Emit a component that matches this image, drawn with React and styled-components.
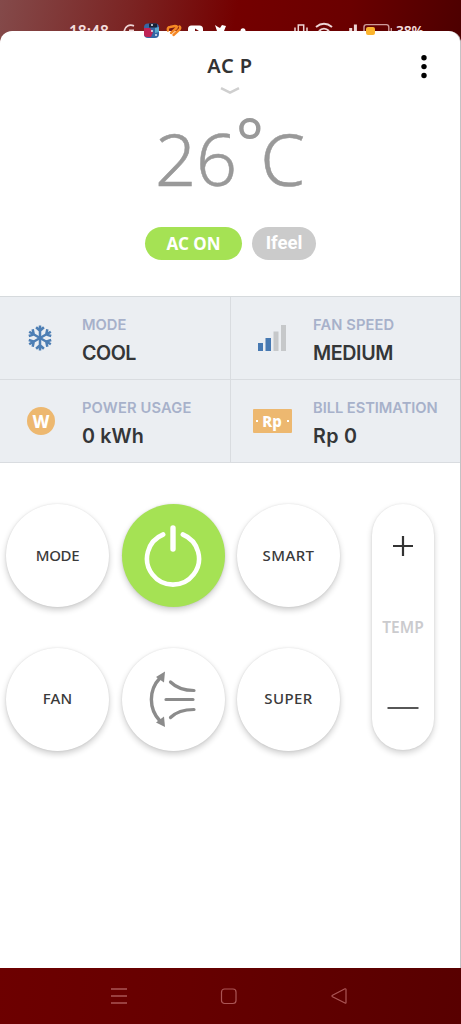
import React from "react";
import styled, { createGlobalStyle } from "styled-components";

const Global = createGlobalStyle`
  * { box-sizing: border-box; }
  body { margin: 0; background: #650000; }
`;

const Screen = styled.div`
  position: relative;
  width: 461px;
  height: 1024px;
  padding-top: 31px;
  display: flex;
  flex-direction: column;
  overflow: hidden;
  font-family: "Noto Sans", sans-serif;
  background: linear-gradient(100deg, #844a4a 0%, #7b2423 28%, #740000 51%, #6a0000 75%, #4d0000 100%) 0 0 / 100% 44px no-repeat,
    linear-gradient(95deg, #700000 0%, #660000 50%, #580000 100%);
`;

const StatusBar = styled.div`
  position: absolute;
  top: 20px;
  left: 0;
  width: 100%;
  height: 22px;
  z-index: 2;
  pointer-events: none;
`;

const StatusIcons = styled.svg`
  display: block;
`;

const StatusText = styled.span`
  position: absolute;
  top: 0;
  left: ${(p) => p.$left}px;
  height: 11px;
  overflow: hidden;
  font-size: ${(p) => p.$size}px;
  line-height: 22px;
  font-weight: 600;
  letter-spacing: ${(p) => p.$spacing || 0}px;
  color: #f3dddd;
`;

const Sheet = styled.main`
  flex: 0 0 937px;
  display: flex;
  flex-direction: column;
  background: #fff;
  border-right: 1px solid #c3c3c5;
  border-radius: 12px 12px 0 0;
`;

const Header = styled.header`
  height: 66px;
  display: grid;
  grid-template-columns: 74px 1fr 74px;
`;

const TitleGroup = styled.div`
  grid-column: 2;
  display: flex;
  flex-direction: column;
  align-items: center;
  padding-top: 22px;
`;

const Title = styled.h1`
  margin: 0;
  font-size: 20px;
  line-height: 26px;
  font-weight: 600;
  color: #333;
  letter-spacing: 0.5px;
`;

const Chevron = styled.svg`
  margin-top: 8px;
  display: block;
`;

const MenuButton = styled.button`
  padding: 23px 0 0 35px;
  border: 0;
  background: none;
  display: flex;
  align-items: flex-start;
`;

const Temperature = styled.div`
  height: 130px;
  padding-left: 155px;
  display: flex;
  align-items: flex-start;
  font-size: 72px;
  font-weight: 300;
  line-height: 98px;
  padding-top: 12px;
  color: #999;
  -webkit-text-stroke: 0.5px #999;
  white-space: nowrap;
`;

const Degree = styled.span`
  width: 23px;
  margin: -17px -1px 0 1px;
  display: flex;
  justify-content: center;
  font-size: 67px;
  font-weight: 400;
  -webkit-text-stroke: 0;
`;

const Badges = styled.div`
  display: flex;
  gap: 10px;
  padding-left: 145px;
  height: 69px;
`;

const Badge = styled.span`
  width: ${(p) => p.$width}px;
  height: 33px;
  border-radius: 17px;
  background: ${(p) => p.$color};
  color: #fff;
  font-family: ${(p) => p.$font || "inherit"};
  font-size: ${(p) => p.$size || 17}px;
  font-weight: 700;
  line-height: 33px;
  text-align: center;
`;

const InfoGrid = styled.section`
  display: grid;
  grid-template-columns: 231px 229px;
  grid-auto-rows: 83px;
  height: 167px;
  background: #ebeef2;
  border-top: 1px solid #d6dadd;
`;

const InfoCell = styled.div`
  display: grid;
  grid-template-columns: 82px 1fr;
  border-bottom: 1px solid #d9dce0;
  border-right: ${(p) => (p.$divider ? "1px solid #d9dce0" : "0")};
`;

const InfoIcon = styled.div`
  display: flex;
  align-items: center;
  justify-content: center;
  padding-right: ${(p) => p.$inset || 0}px;
`;

const InfoText = styled.div`
  padding-top: 18px;
  font-family: Inter, sans-serif;
  white-space: nowrap;
`;

const InfoLabel = styled.div`
  font-size: 14.7px;
  line-height: 21px;
  font-weight: 600;
  color: #a7b1ca;
  letter-spacing: ${(p) => p.$spacing || 0}px;
`;

const InfoValue = styled.div`
  margin-top: 3px;
  font-size: 19.7px;
  line-height: 28px;
  font-weight: 600;
  color: #343638;
  letter-spacing: ${(p) => p.$spacing || 0}px;
`;

const Controls = styled.section`
  display: flex;
  gap: 32px;
  padding: 41px 0 0 6px;
`;

const ButtonGrid = styled.div`
  display: grid;
  grid-template-columns: repeat(3, 103px);
  grid-auto-rows: 103px;
  column-gap: 12.5px;
  row-gap: 40.5px;
`;

const RoundButton = styled.button`
  display: flex;
  align-items: center;
  justify-content: center;
  border: 0;
  padding: 0 0 2px;
  border-radius: 50%;
  background: ${(p) => (p.$active ? "#a5e254" : "#fff")};
  box-shadow: 0 3px 6px rgba(0, 0, 0, 0.2), 0 0 2px rgba(0, 0, 0, 0.1);
  font-family: inherit;
  font-size: 15px;
  font-weight: 500;
  letter-spacing: ${(p) => p.$spacing || 0}px;
  color: #3a3a3a;
`;

const TempPill = styled.div`
  width: 62px;
  height: 246px;
  border-radius: 31px;
  background: #fff;
  box-shadow: 0 3px 6px rgba(0, 0, 0, 0.18), 0 0 2px rgba(0, 0, 0, 0.1);
  display: flex;
  flex-direction: column;
  align-items: center;
  justify-content: space-between;
  padding: 31px 0 31px;
  font-size: 15.5px;
  line-height: 22px;
  font-weight: 600;
  color: #cbcbce;
`;

const NavBar = styled.nav`
  height: 56px;
  display: flex;
  gap: 90px;
  padding: 18px 0 0 109px;
`;

const StatusBarRow = () => (
  <StatusBar>
    <StatusText $left={69} $size={15.5} $spacing={0}>18:48</StatusText>
    <StatusText $left={396} $size={14} $spacing={-0.2}>38%</StatusText>
    <StatusIcons width="461" height="22" viewBox="0 20 461 22" fill="none">
      <g stroke="#eed6d6" strokeWidth="1.8">
        <path d="M134 25.8c-5-1.7-9 .5-9.8 5.2M129 30.4h5" />
        <path d="M295 27.5v3.5M307 27.5v3.5M298.3 31v-6h5.4v6" strokeWidth="1.5" />
        <path d="M316 27c5-4 11-4 16 0M319 31c3-3 7-3 10 0" strokeWidth="2" />
        <path d="M350.7 28v3M355.4 24.5v6.5" strokeWidth="3" />
      </g>
      <rect x="144" y="23.5" width="15" height="14.5" rx="4" fill="#3567a5" />
      <path d="M144 28h6l3 4-2 5h-4q-3 0-3-3z" fill="#bf2456" />
      <path d="M149 23.5h8v4h-8z" fill="#182235" />
      <path d="M155 28l4-1v5l-4 1z" fill="#5ca9ca" />
      <path d="M151 25h2M151 31h2M155 35h2" stroke="#e4eaf3" strokeWidth="1.5" />
      <path d="M168 30.5q-1-3 2-3.5l5-1q3 0 1.5 2L171 33M173.5 35l6-5.5q1.5-2 0-3" stroke="#f68824" strokeWidth="2.4" strokeLinecap="round" strokeLinejoin="round" />
      <path d="M188 31v-2q0-3.5 3.5-3.5h8q3.5 0 3.5 3.5v2h-4l-4-2.6V31z" fill="#fff" />
      <path d="M215 25l3 2 2 1 2-3 4 1-2 5h-7z" fill="#fff" />
      <circle cx="243" cy="30.7" r="2.5" fill="#fff" />
      <path d="M364 31v-4q0-2.4 2.4-2.4h20q2.4 0 2.4 2.4v4M391.3 28v3" stroke="#cd9a9a" strokeWidth="1.4" />
      <rect x="366" y="27" width="9" height="8" rx="2" fill="#fbb42d" />
    </StatusIcons>
  </StatusBar>
);

const Snowflake = () => (
  <svg width="24" height="26" viewBox="-12 -13 24 26" stroke="#4d7eb4" strokeWidth="2.5" fill="none">
    {[0, 60, 120, 180, 240, 300].map((angle) => (
      <path key={angle} transform={`rotate(${angle})`} d="M0 0V-12.5M-3.9-10.7L0-7.2L3.9-10.7" />
    ))}
  </svg>
);

const SpeedBars = () => (
  <svg width="28" height="27" viewBox="0 0 28 27">
    <path d="M0 18h5v8H0zM7.5 13h5.5v13H7.5z" fill="#4779b2" />
    <path d="M15.5 6.5h5V26h-5zM23 0h5v26h-5z" fill="#c6c8ca" />
  </svg>
);

const WattIcon = styled.span`
  width: 28px;
  height: 28px;
  border-radius: 50%;
  background: #edb870;
  color: #fff;
  font-size: 17px;
  line-height: 29px;
  font-weight: 800;
  text-align: center;
`;

const RupiahIcon = styled.span`
  width: 39px;
  height: 24px;
  border-radius: 1px;
  background: #edb870;
  color: #fff;
  display: flex;
  align-items: center;
  justify-content: space-between;
  padding: 0 3px;
  font-size: 15px;
  line-height: 22px;
  font-weight: 800;
  &::before, &::after {
    content: "";
    width: 2px;
    height: 2px;
    background: #fff;
  }
`;

const info = [
  { label: "MODE", value: "COOL", icon: <Snowflake />, inset: 2, labelSpacing: 0, valueSpacing: -0.5 },
  { label: "FAN SPEED", value: "MEDIUM", icon: <SpeedBars />, inset: 0, labelSpacing: 0.1, valueSpacing: -0.4 },
  { label: "POWER USAGE", value: "0 kWh", icon: <WattIcon>W</WattIcon>, inset: 0, labelSpacing: 0.15, valueSpacing: 0.1 },
  { label: "BILL ESTIMATION", value: "Rp 0", icon: <RupiahIcon>Rp</RupiahIcon>, inset: 0, labelSpacing: -0.05, valueSpacing: 0.3 },
];

const PowerIcon = () => (
  <svg width="60" height="64" viewBox="0 0 60 64" fill="none" stroke="#fff" strokeLinecap="round">
    <path d="M20.2 11.5A26 26 0 1 0 39.8 11.5" strokeWidth="4.6" />
    <path d="M30 5V26" strokeWidth="5.4" />
  </svg>
);

const SwingIcon = () => (
  <svg width="48" height="58" viewBox="0 0 48 58" fill="none" stroke="#8b8b8b" strokeLinecap="round">
    <path d="M11 9C-.5 21-.5 40 11 52" strokeWidth="3.4" />
    <path d="M16 2.5L7 8L15 13.5zM16 58L7 53.5L15 47.5z" fill="#8b8b8b" stroke="none" />
    <path d="M21.5 13C27 18.5 34 21.5 45 21.5M17 30.5H44M21.5 48.5C27 43 34 40.5 45 40.5" strokeWidth="3.2" />
  </svg>
);

export default function App() {
  return (
    <Screen>
      <Global />
      <StatusBarRow />
      <Sheet>
        <Header>
          <TitleGroup>
            <Title>AC P</Title>
            <Chevron width="20" height="8" viewBox="0 0 20 8" fill="none">
              <path d="M1 1.2L10 5.7L19 1.2" stroke="#cfcfcf" strokeWidth="2.5" />
            </Chevron>
          </TitleGroup>
          <MenuButton aria-label="Menu">
            <svg width="6" height="25" viewBox="0 0 6 25">
              <circle cx="3" cy="3.7" r="2.7" />
              <circle cx="3" cy="12.6" r="2.7" />
              <circle cx="3" cy="21.5" r="2.7" />
            </svg>
          </MenuButton>
        </Header>
        <Temperature>
          <span>26</span>
          <Degree>°</Degree>
          <span>C</span>
        </Temperature>
        <Badges>
          <Badge $width={97} $color="#a5e254">AC ON</Badge>
          <Badge $width={64} $color="#cbcbcb" $size={18.5} $font="Roboto, sans-serif">Ifeel</Badge>
        </Badges>
        <InfoGrid>
          {info.map((item, i) => (
            <InfoCell key={item.label} $divider={i % 2 === 0}>
              <InfoIcon $inset={item.inset}>{item.icon}</InfoIcon>
              <InfoText>
                <InfoLabel $spacing={item.labelSpacing}>{item.label}</InfoLabel>
                <InfoValue $spacing={item.valueSpacing}>{item.value}</InfoValue>
              </InfoText>
            </InfoCell>
          ))}
        </InfoGrid>
        <Controls>
          <ButtonGrid>
            <RoundButton $spacing={-0.3}>MODE</RoundButton>
            <RoundButton $active aria-label="Power"><PowerIcon /></RoundButton>
            <RoundButton $spacing={0.4}>SMART</RoundButton>
            <RoundButton $spacing={0.1}>FAN</RoundButton>
            <RoundButton aria-label="Swing"><SwingIcon /></RoundButton>
            <RoundButton $spacing={0.4}>SUPER</RoundButton>
          </ButtonGrid>
          <TempPill>
            <svg width="22" height="22" viewBox="0 0 22 22" stroke="#333" strokeWidth="2.2">
              <path d="M1 11H21M11 1V21" />
            </svg>
            <span>TEMP</span>
            <svg width="32" height="22" viewBox="0 0 32 22" stroke="#444" strokeWidth="1.8">
              <path d="M.5 11H31.5" />
            </svg>
          </TempPill>
        </Controls>
      </Sheet>
      <NavBar>
        <svg width="20" height="20" viewBox="0 0 20 20" fill="none" stroke="#ab5555" strokeWidth="1.3">
          <path d="M2 3H18M2 10H18M2 17H18" />
        </svg>
        <svg width="20" height="20" viewBox="0 0 20 20" fill="none" stroke="#ab5555" strokeWidth="1.2">
          <rect x="2.5" y="3" width="14.5" height="14.5" rx="3" />
        </svg>
        <svg width="20" height="20" viewBox="0 0 20 20" fill="none" stroke="#ab5555" strokeWidth="1.2" strokeLinejoin="round">
          <path d="M3.5 9.2L16 2.8Q17 2.5 17 3.6V16.5Q17 17.6 16 17L3.5 10.8Q2.5 10 3.5 9.2z" />
        </svg>
      </NavBar>
    </Screen>
  );
}
